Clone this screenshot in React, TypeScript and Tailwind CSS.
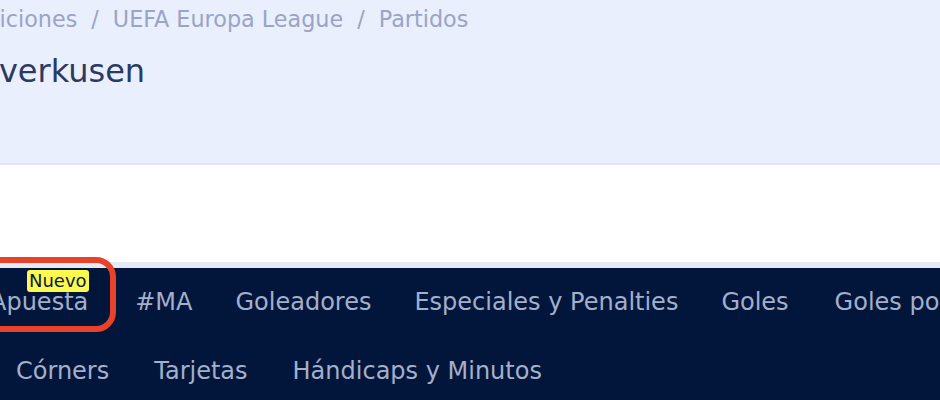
import React from "react";

export default function App() {
  const row1 = ["#MA", "Goleadores", "Especiales y Penalties", "Goles"];
  const row2 = ["Córners", "Tarjetas", "Hándicaps y Minutos"];
  return (
    <div
      className="w-[940px] h-[400px] overflow-hidden bg-white relative"
      style={{ fontFamily: '"DejaVu Sans", Verdana, sans-serif' }}
    >
      <div className="h-[165px] bg-[#e9effc] border-b-2 border-[#dee5f5] flex flex-col">
        <div className="flex items-center h-[40px] text-[22.3px] text-[#9aa4c6] whitespace-nowrap ml-[-88px]">
          <span>Competiciones</span>
          <span className="px-[14px]">/</span>
          <span>UEFA Europa League</span>
          <span className="px-[14px]">/</span>
          <span>Partidos</span>
        </div>
        <div className="flex items-center h-[60px] pt-[1px] text-[32px] text-[#2b3a63] whitespace-nowrap ml-[-317px]">
          AS Roma - Bayer Leverkusen
        </div>
      </div>
      <div className="h-[97px] bg-white" />
      <div className="h-[6px] bg-[#e4eaf6]" />
      <div className="bg-[#02163b] text-[24px] text-[#a4afcb] whitespace-nowrap h-[200px]">
        <div className="flex items-center h-[68px] gap-[43px]">
          <div className="relative ml-[-10px] mr-[4px]">
            <span>Apuesta</span>
            <span className="absolute left-[37px] top-[-14px] bg-[#fdf94e] text-[#0b1a3d] text-[18px] leading-[22px] px-[2px] rounded-[3px]">
              Nuevo
            </span>
            <div className="absolute left-[-12px] right-[-28px] top-[-27px] bottom-[-12px] border-[6px] border-[#e8432a] rounded-[20px]" />
          </div>
          {row1.map((t) => (
            <span key={t}>{t}</span>
          ))}
          <span className="ml-[3px]">Goles por Mitades</span>
        </div>
        <div className="flex items-center h-[70px] gap-[45px] pl-[16px]">
          {row2.map((t) => (
            <span key={t}>{t}</span>
          ))}
        </div>
      </div>
    </div>
  );
}
